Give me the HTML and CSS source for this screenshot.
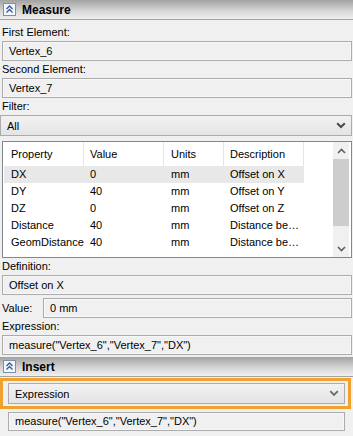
FILE: index.html
```html
<!DOCTYPE html>
<html lang="en">
<head>
<meta charset="UTF-8" />
<title>Measure</title>
<link rel="stylesheet" href="styles.css">
</head>
<body>

<div class="section-head">
  <svg class="fold" width="13" height="13" viewBox="0 0 13 13">
    <rect x="0.5" y="0.5" width="12" height="12" fill="#f3f7fb" stroke="#7f8fa6" />
    <path d="M3.5 6 L6.5 3 L9.5 6 M3.5 9.5 L6.5 6.5 L9.5 9.5" fill="none" stroke="#2b5c9c" stroke-width="1.3" />
  </svg>
  <span>Measure</span>
</div>

<div class="section-body">
  <div class="label first">First Element:</div>
  <div class="field">Vertex_6</div>

  <div class="label">Second Element:</div>
  <div class="field">Vertex_7</div>

  <div class="label">Filter:</div>
  <div class="combo wide">
    <span>All</span>
    <svg width="10" height="7" viewBox="0 0 10 7"><path d="M1.2 1.2 L5 5 L8.8 1.2" fill="none" stroke="#4a4a4a" stroke-width="2" /></svg>
  </div>

  <div class="grid">
    <div class="grid-main">
      <div class="row head">
        <div class="c1">Property</div>
        <div class="c2">Value</div>
        <div class="c3">Units</div>
        <div class="c4">Description</div>
      </div>
      <div class="row sel">
        <div class="c1">DX</div><div class="c2">0</div><div class="c3">mm</div><div class="c4">Offset on X</div>
      </div>
      <div class="row">
        <div class="c1">DY</div><div class="c2">40</div><div class="c3">mm</div><div class="c4">Offset on Y</div>
      </div>
      <div class="row">
        <div class="c1">DZ</div><div class="c2">0</div><div class="c3">mm</div><div class="c4">Offset on Z</div>
      </div>
      <div class="row">
        <div class="c1">Distance</div><div class="c2">40</div><div class="c3">mm</div><div class="c4">Distance be…</div>
      </div>
      <div class="row">
        <div class="c1">GeomDistance</div><div class="c2">40</div><div class="c3">mm</div><div class="c4">Distance be…</div>
      </div>
    </div>
    <div class="scrollbar">
      <div class="arrow">
        <svg width="9" height="6" viewBox="0 0 9 6"><path d="M1 5 L4.5 1.5 L8 5" fill="none" stroke="#606060" stroke-width="1.6" /></svg>
      </div>
      <div class="thumb"></div>
      <div class="track"></div>
      <div class="arrow">
        <svg width="9" height="6" viewBox="0 0 9 6"><path d="M1 1 L4.5 4.5 L8 1" fill="none" stroke="#606060" stroke-width="1.6" /></svg>
      </div>
    </div>
  </div>

  <div class="label">Definition:</div>
  <div class="field">Offset on X</div>

  <div class="value-row">
    <span class="value-label">Value:</span>
    <div class="field grow">0 mm</div>
  </div>

  <div class="label">Expression:</div>
  <div class="field">measure("Vertex_6","Vertex_7","DX")</div>
</div>

<div class="section-head insert">
  <svg class="fold" width="13" height="13" viewBox="0 0 13 13">
    <rect x="0.5" y="0.5" width="12" height="12" fill="#f3f7fb" stroke="#7f8fa6" />
    <path d="M3.5 6 L6.5 3 L9.5 6 M3.5 9.5 L6.5 6.5 L9.5 9.5" fill="none" stroke="#2b5c9c" stroke-width="1.3" />
  </svg>
  <span>Insert</span>
</div>

<div class="focus-box">
  <div class="combo">
    <span>Expression</span>
    <svg width="10" height="7" viewBox="0 0 10 7"><path d="M1.2 1.2 L5 5 L8.8 1.2" fill="none" stroke="#6a6a6a" stroke-width="1.8" /></svg>
  </div>
</div>
<div class="field result">measure("Vertex_6","Vertex_7","DX")</div>

</body>
</html>
```

FILE: styles.css
```css
body {
  margin: 0;
  width: 353px;
  background: #f0f0f0;
  font-family: "Liberation Sans", Arial, sans-serif;
  font-size: 11px;
  color: #000;
}
.section-head {
  height: 19px;
  border-bottom: 1px solid #a3a3a3;
  background: linear-gradient(#a2a2a2, #d4d4d4 55%, #f0f0f0);
  display: flex;
  align-items: center;
  gap: 6px;
  padding-left: 3px;
  font-size: 12px;
  font-weight: bold;
}
.section-head.insert {
  margin-top: 2px;
}
.fold {
  display: block;
}
.section-body {
  padding: 0 1px 0 2px;
}
.label {
  height: 17px;
  line-height: 17px;
}
.label.first {
  height: 21px;
  line-height: 24px;
}
.field {
  height: 20px;
  box-sizing: border-box;
  border: 1px solid #acacac;
  box-shadow: inset 0 0 0 1px #f7f7f7;
  padding-left: 6px;
  line-height: 18px;
  white-space: nowrap;
  overflow: hidden;
}
.combo {
  height: 21px;
  box-sizing: border-box;
  border: 1px solid #acacac;
  background: linear-gradient(#f2f2f2, #e4e4e4);
  display: flex;
  align-items: center;
  justify-content: space-between;
  padding: 0 5px 0 6px;
}
.combo svg {
  display: block;
}
.combo.wide {
  margin-left: -2px;
}
.grid {
  margin-top: 5px;
  height: 117px;
  box-sizing: border-box;
  border: 1px solid #828790;
  background: #fff;
  display: flex;
  padding-right: 2px;
}
.grid-main {
  flex: 1;
  padding-left: 1px;
}
.row {
  display: flex;
  height: 17px;
  line-height: 17px;
  width: 300px;
}
.row.head {
  height: 24px;
  line-height: 24px;
}
.row.head div {
  border-right: 1px solid #e5e5e5;
  box-sizing: border-box;
}
.row.sel {
  background: #e8e8e8;
}
.row div {
  padding-left: 6px;
  box-sizing: border-box;
  white-space: nowrap;
}
.c1 { width: 80px; padding-left: 7px !important; }
.c2 { width: 80px; }
.c3 { width: 60px; padding-left: 7px !important; }
.c4 { width: 80px; }
.scrollbar {
  width: 16px;
  background: #f0f0f0;
  display: flex;
  flex-direction: column;
}
.arrow {
  height: 17px;
  display: flex;
  align-items: center;
  justify-content: center;
}
.thumb {
  height: 67px;
  background: #cdcdcd;
}
.track {
  flex: 1;
}
.value-row {
  display: flex;
  align-items: center;
  margin-top: 3px;
}
.value-label {
  width: 41px;
}
.grow {
  flex: 1;
}
.focus-box {
  margin-top: 1px;
  width: 351px;
  box-sizing: border-box;
  border: 3px solid #f0a12e;
  padding: 2px 3px 2px 5px;
}
.result {
  margin: 3px 0 0 8px;
  width: 337px;
  height: 19px;
  line-height: 17px;
}
```
